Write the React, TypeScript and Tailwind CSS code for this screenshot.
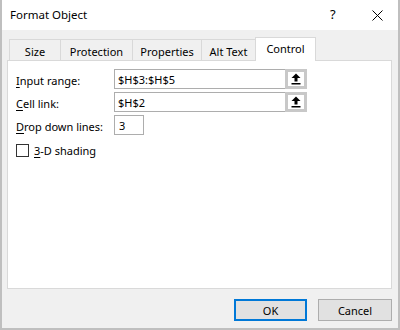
import React from "react";

const font = { fontFamily: '"Segoe UI", "Noto Sans", "Open Sans", sans-serif' };

const tabs = [
  { label: "Size", w: "w-[52px]" },
  { label: "Protection", w: "w-[73px]" },
  { label: "Properties", w: "w-[70px]" },
  { label: "Alt Text", w: "w-[55px]" },
];

function UpArrow() {
  return (
    <svg width="10" height="12" viewBox="0 0 10 12" className="block">
      <polygon points="5,0.5 9.5,5 0.5,5" fill="#000" />
      <rect x="3.5" y="5" width="3" height="3.5" fill="#000" />
      <rect x="0.5" y="10" width="9" height="1.5" fill="#000" />
    </svg>
  );
}

function RangeInput({ value }: { value: string }) {
  return (
    <div className="w-[193px] h-[20px] flex border border-[#adadad] bg-white overflow-visible">
      <div className="flex-1 flex items-center pl-[3px] text-[11px] leading-none text-black">{value}</div>
      <div className="w-[22px] -my-px -mr-px h-[20px] border-[3px] border-[#c8c8c8] bg-white flex items-center justify-center">
        <UpArrow />
      </div>
    </div>
  );
}

function Label({ k, rest }: { k: string; rest: string }) {
  return (
    <span className="text-[11px] leading-none text-black">
      <span className="underline underline-offset-2">{k}</span>
      {rest}
    </span>
  );
}

export default function App() {
  return (
    <div
      className="w-[400px] h-[330px] bg-[#f0f0f0] border-x-2 border-b-2 border-[#bfbfbf] flex flex-col overflow-hidden"
      style={font}
    >
      {/* title bar */}
      <div className="h-[30px] bg-white flex items-center pl-[8px] shrink-0">
        <span className="text-[11.5px] text-black flex-1">Format Object</span>
        <span className="text-[13px] text-black w-[12px] mr-[30px]">?</span>
        <svg width="11" height="11" viewBox="0 0 11 11" className="mr-[15px]">
          <path d="M0.5 0.5 L10.5 10.5 M10.5 0.5 L0.5 10.5" stroke="#000" strokeWidth="1" />
        </svg>
      </div>

      {/* tabs */}
      <div className="h-[30px] flex items-end pl-[7px] shrink-0">
        {tabs.map((t, i) => (
          <div
            key={t.label}
            className={`${t.w} h-[21px] ${i > 0 ? "-ml-px" : ""} border border-b-0 border-[#d9d9d9] bg-[#f0f0f0] flex items-center justify-center pt-[2px] text-[11px] leading-none text-black`}
          >
            {t.label}
          </div>
        ))}
        <div className="w-[61px] h-[24px] -ml-px -mb-px relative z-10 border border-b-0 border-[#d9d9d9] bg-white flex items-center justify-center pb-[2px] text-[11px] leading-none text-black">
          Control
        </div>
      </div>

      {/* panel */}
      <div className="flex-1 mx-[5px] mr-[6px] bg-white border border-[#d9d9d9] pt-[8px] pl-[8px] flex flex-col gap-[3px]">
        <div className="h-[20px] flex items-center">
          <div className="w-[98px]">
            <Label k="I" rest="nput range:" />
          </div>
          <RangeInput value="$H$3:$H$5" />
        </div>
        <div className="h-[20px] flex items-center">
          <div className="w-[98px]">
            <Label k="C" rest="ell link:" />
          </div>
          <RangeInput value="$H$2" />
        </div>
        <div className="h-[20px] flex items-center">
          <div className="w-[98px]">
            <Label k="D" rest="rop down lines:" />
          </div>
          <div className="w-[30px] h-[20px] border border-[#adadad] bg-white flex items-center pl-[4px] text-[11px] leading-none text-black">
            3
          </div>
        </div>
        <div className="h-[14px] flex items-center gap-[5px] mt-[5px]">
          <div className="w-[13px] h-[13px] border border-[#333333] bg-white" />
          <Label k="3" rest="-D shading" />
        </div>
      </div>

      {/* footer */}
      <div className="h-[39px] shrink-0 flex justify-end items-start pt-[10px] pr-[6px] gap-[11px]">
        <button className="w-[73px] h-[22px] border-2 border-[#0078d7] bg-[#e1e1e1] text-[11px] leading-none text-black flex items-center justify-center">
          OK
        </button>
        <button className="w-[74px] h-[22px] border border-[#adadad] bg-[#e1e1e1] text-[11px] leading-none text-black flex items-center justify-center">
          Cancel
        </button>
      </div>
    </div>
  );
}
